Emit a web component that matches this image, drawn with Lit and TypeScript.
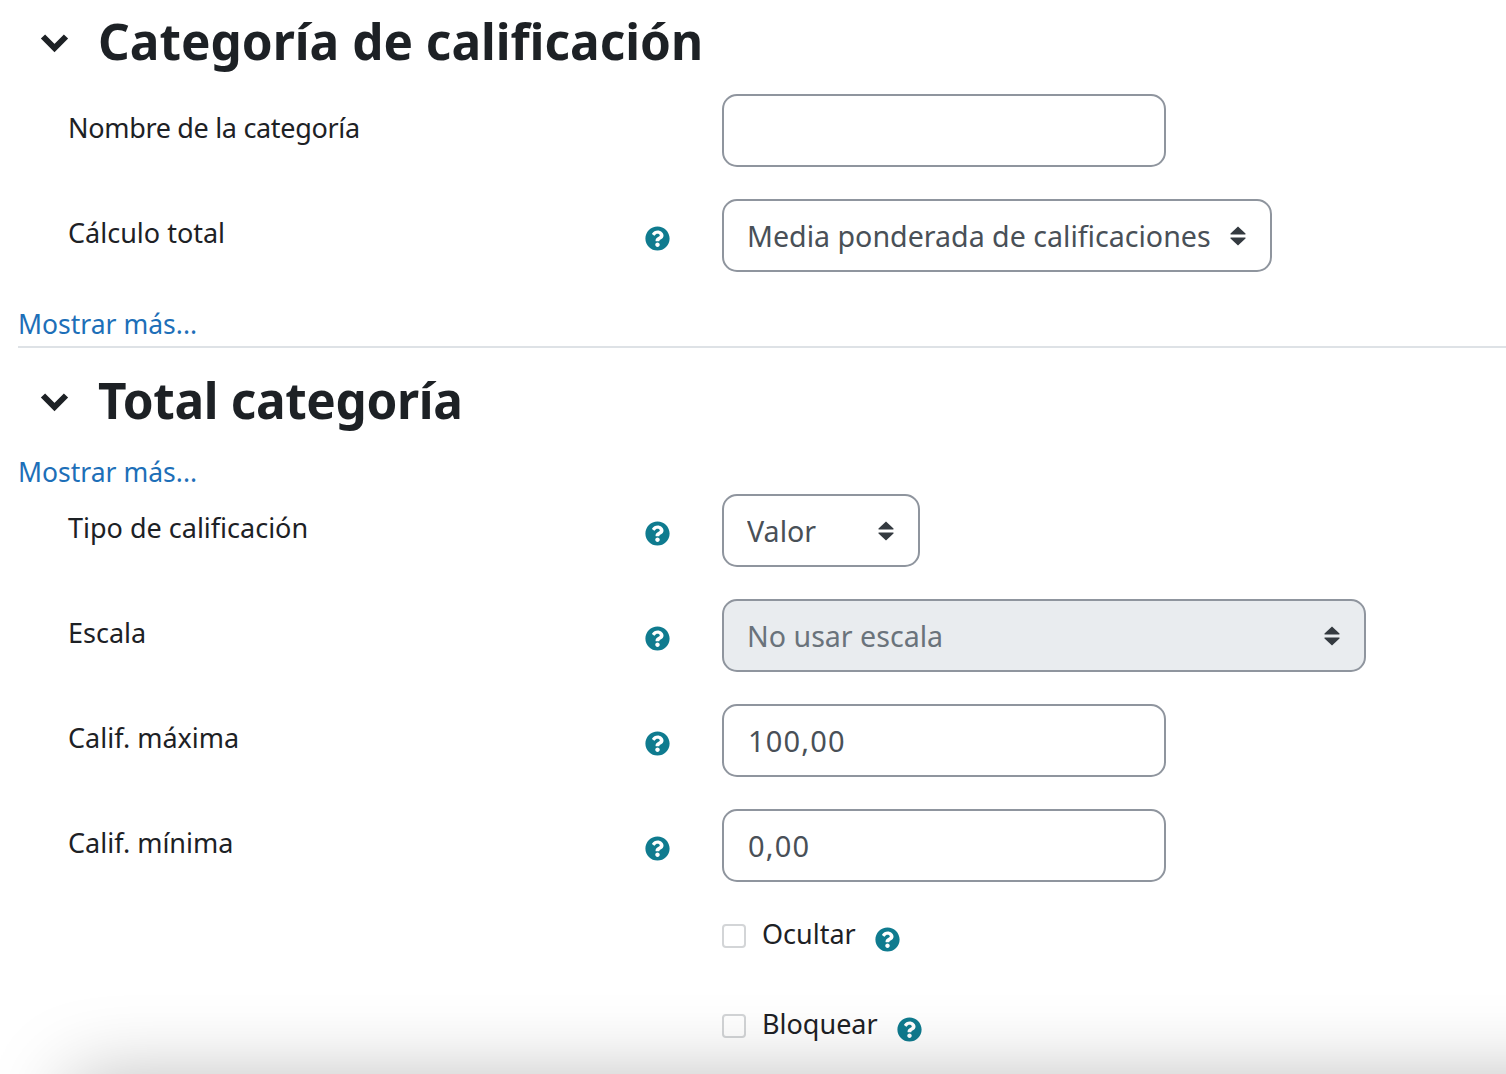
import { LitElement, html, css } from "lit";
import { customElement } from "lit/decorators.js";

const HELP = "M504 256c0 136.997-111.043 248-248 248S8 392.997 8 256C8 119.083 119.043 8 256 8s248 111.083 248 248zM262.655 90c-54.497 0-89.255 22.957-116.549 63.758-3.536 5.286-2.353 12.415 2.715 16.258l34.699 26.31c5.205 3.947 12.621 3.008 16.665-2.122 17.864-22.658 30.113-35.797 57.303-35.797 20.429 0 45.698 13.148 45.698 32.958 0 14.976-12.363 22.667-32.534 33.976C247.128 238.528 216 254.941 216 296v4c0 6.627 5.373 12 12 12h56c6.627 0 12-5.373 12-12v-1.333c0-28.462 83.186-29.647 83.186-106.667 0-58.002-60.165-102-116.531-102zM256 338c-25.365 0-46 20.635-46 46 0 25.364 20.635 46 46 46s46-20.636 46-46c0-25.365-20.635-46-46-46z";

const help = () => html`<svg class="help" viewBox="0 0 512 512"><path fill-rule="evenodd" d=${HELP}></path></svg>`;
const chevron = () => html`<svg class="chev" viewBox="0 0 29 20"><polyline points="3,3.5 14.5,15 26,3.5"></polyline></svg>`;
const arrows = () => html`<svg class="arrows" viewBox="0 0 16 20"><path d="M8 0.5 L15.5 7.5 Q16 8.5 15 8.5 H1 Q0 8.5 .5 7.5 Z M1 11.5 H15 Q16 11.5 15.5 12.5 L8 19.5 L.5 12.5 Q0 11.5 1 11.5 Z"></path></svg>`;

@customElement("app-root")
export class AppRoot extends LitElement {
  static styles = css`
    :host { display: block; position: relative; height: 1074px; overflow: hidden; background: #fff;
      font-family: "Noto Sans", sans-serif; font-size: 27px; color: #1d2125; }
    .page { padding-left: 18px; }
    .head { display: flex; align-items: center; height: 84px; padding-left: 22px; }
    .head.first { margin-top: -1px; margin-bottom: 11px; }
    .head.second { margin-top: 10px; }
    .head.second h2 { letter-spacing: -0.35px; }
    .chev { width: 29px; height: 20px; margin: 4px 29px 0 0; fill: none; stroke: #1d2125; stroke-width: 6; }
    h2 { margin: 0; font-size: 49.5px; font-weight: 700; line-height: 84px; }
    .row { display: grid; grid-template-columns: 654px 1fr; margin-bottom: 32px; padding-left: 50px; }
    .label { display: flex; justify-content: space-between; padding-right: 52px; height: 73px; }
    .label span { line-height: 68px; }
    .label span.tight { letter-spacing: -0.32px; }
    .help { width: 25px; height: 25px; fill: #0f7b8f; flex: none; margin-top: 27px; }
    input.text, select { box-sizing: border-box; height: 73px; border: 2px solid #8f959e; border-radius: 15px;
      font: inherit; color: #495057; background: #fff; padding: 0 24px; outline: none; display: block; margin: 0; }
    input.text { width: 444px; font-size: 29px; letter-spacing: 1.2px; }
    .sel { position: relative; display: inline-block; }
    select { appearance: none; -webkit-appearance: none; font-size: 28.6px; padding-left: 23px; }
    select:disabled { background: #e9ecef; color: #6a737b; opacity: 1; }
    .w-calc { width: 550px; } .w-tipo { width: 198px; } .w-esc { width: 644px; }
    .arrows { position: absolute; right: 26px; top: 27px; width: 16px; height: 20px; fill: #343a40; pointer-events: none; }
    .more { display: block; color: #1d6fb8; text-decoration: none; line-height: 40px; font-size: 26.5px; }
    .more.tail { margin: 10px 0 2px; }
    hr { margin: 2px 0 0; border: 0; border-top: 2px solid #dee2e6; }
    .check { display: flex; align-items: flex-start; margin: 0 0 42px 704px; height: 48px; }
    .check.first { margin-top: 36px; }
    .check input { appearance: none; -webkit-appearance: none; box-sizing: border-box; width: 24px; height: 24px; margin: 6px 16px 0 0;
      border: 2px solid #d3d5d7; border-radius: 4px; background: #fff; flex: none; }
    .check span { line-height: 32px; margin-right: 19px; }
    .check .help { margin-top: 9px; }
    .shade { position: absolute; left: 80px; right: -120px; top: 1088px; height: 120px;
      box-shadow: 0 0 80px 10px rgba(0,0,0,.27); pointer-events: none; }
  `;

  row(label: string, ctl: unknown, hasHelp = true) {
    return html`<div class="row"><div class="label"><span class=${hasHelp ? "" : "tight"}>${label}</span>${hasHelp ? help() : ""}</div><div>${ctl}</div></div>`;
  }
  sel(cls: string, text: string, disabled = false) {
    return html`<div class="sel"><select class=${cls} ?disabled=${disabled}><option>${text}</option></select>${arrows()}</div>`;
  }

  render() {
    return html`<div class="page">
      <div class="head first">${chevron()}<h2>Categoría de calificación</h2></div>
      ${this.row("Nombre de la categoría", html`<input class="text" value="" />`, false)}
      ${this.row("Cálculo total", this.sel("w-calc", "Media ponderada de calificaciones"))}
      <a class="more" href="#">Mostrar más...</a>
      <hr />
      <div class="head second">${chevron()}<h2>Total categoría</h2></div>
      <a class="more tail" href="#">Mostrar más...</a>
      ${this.row("Tipo de calificación", this.sel("w-tipo", "Valor"))}
      ${this.row("Escala", this.sel("w-esc", "No usar escala", true))}
      ${this.row("Calif. máxima", html`<input class="text" value="100,00" />`)}
      ${this.row("Calif. mínima", html`<input class="text" value="0,00" />`)}
      <div class="check first"><input type="checkbox" /><span>Ocultar</span>${help()}</div>
      <div class="check"><input type="checkbox" /><span>Bloquear</span>${help()}</div>
    </div><div class="shade"></div>`;
  }
}
